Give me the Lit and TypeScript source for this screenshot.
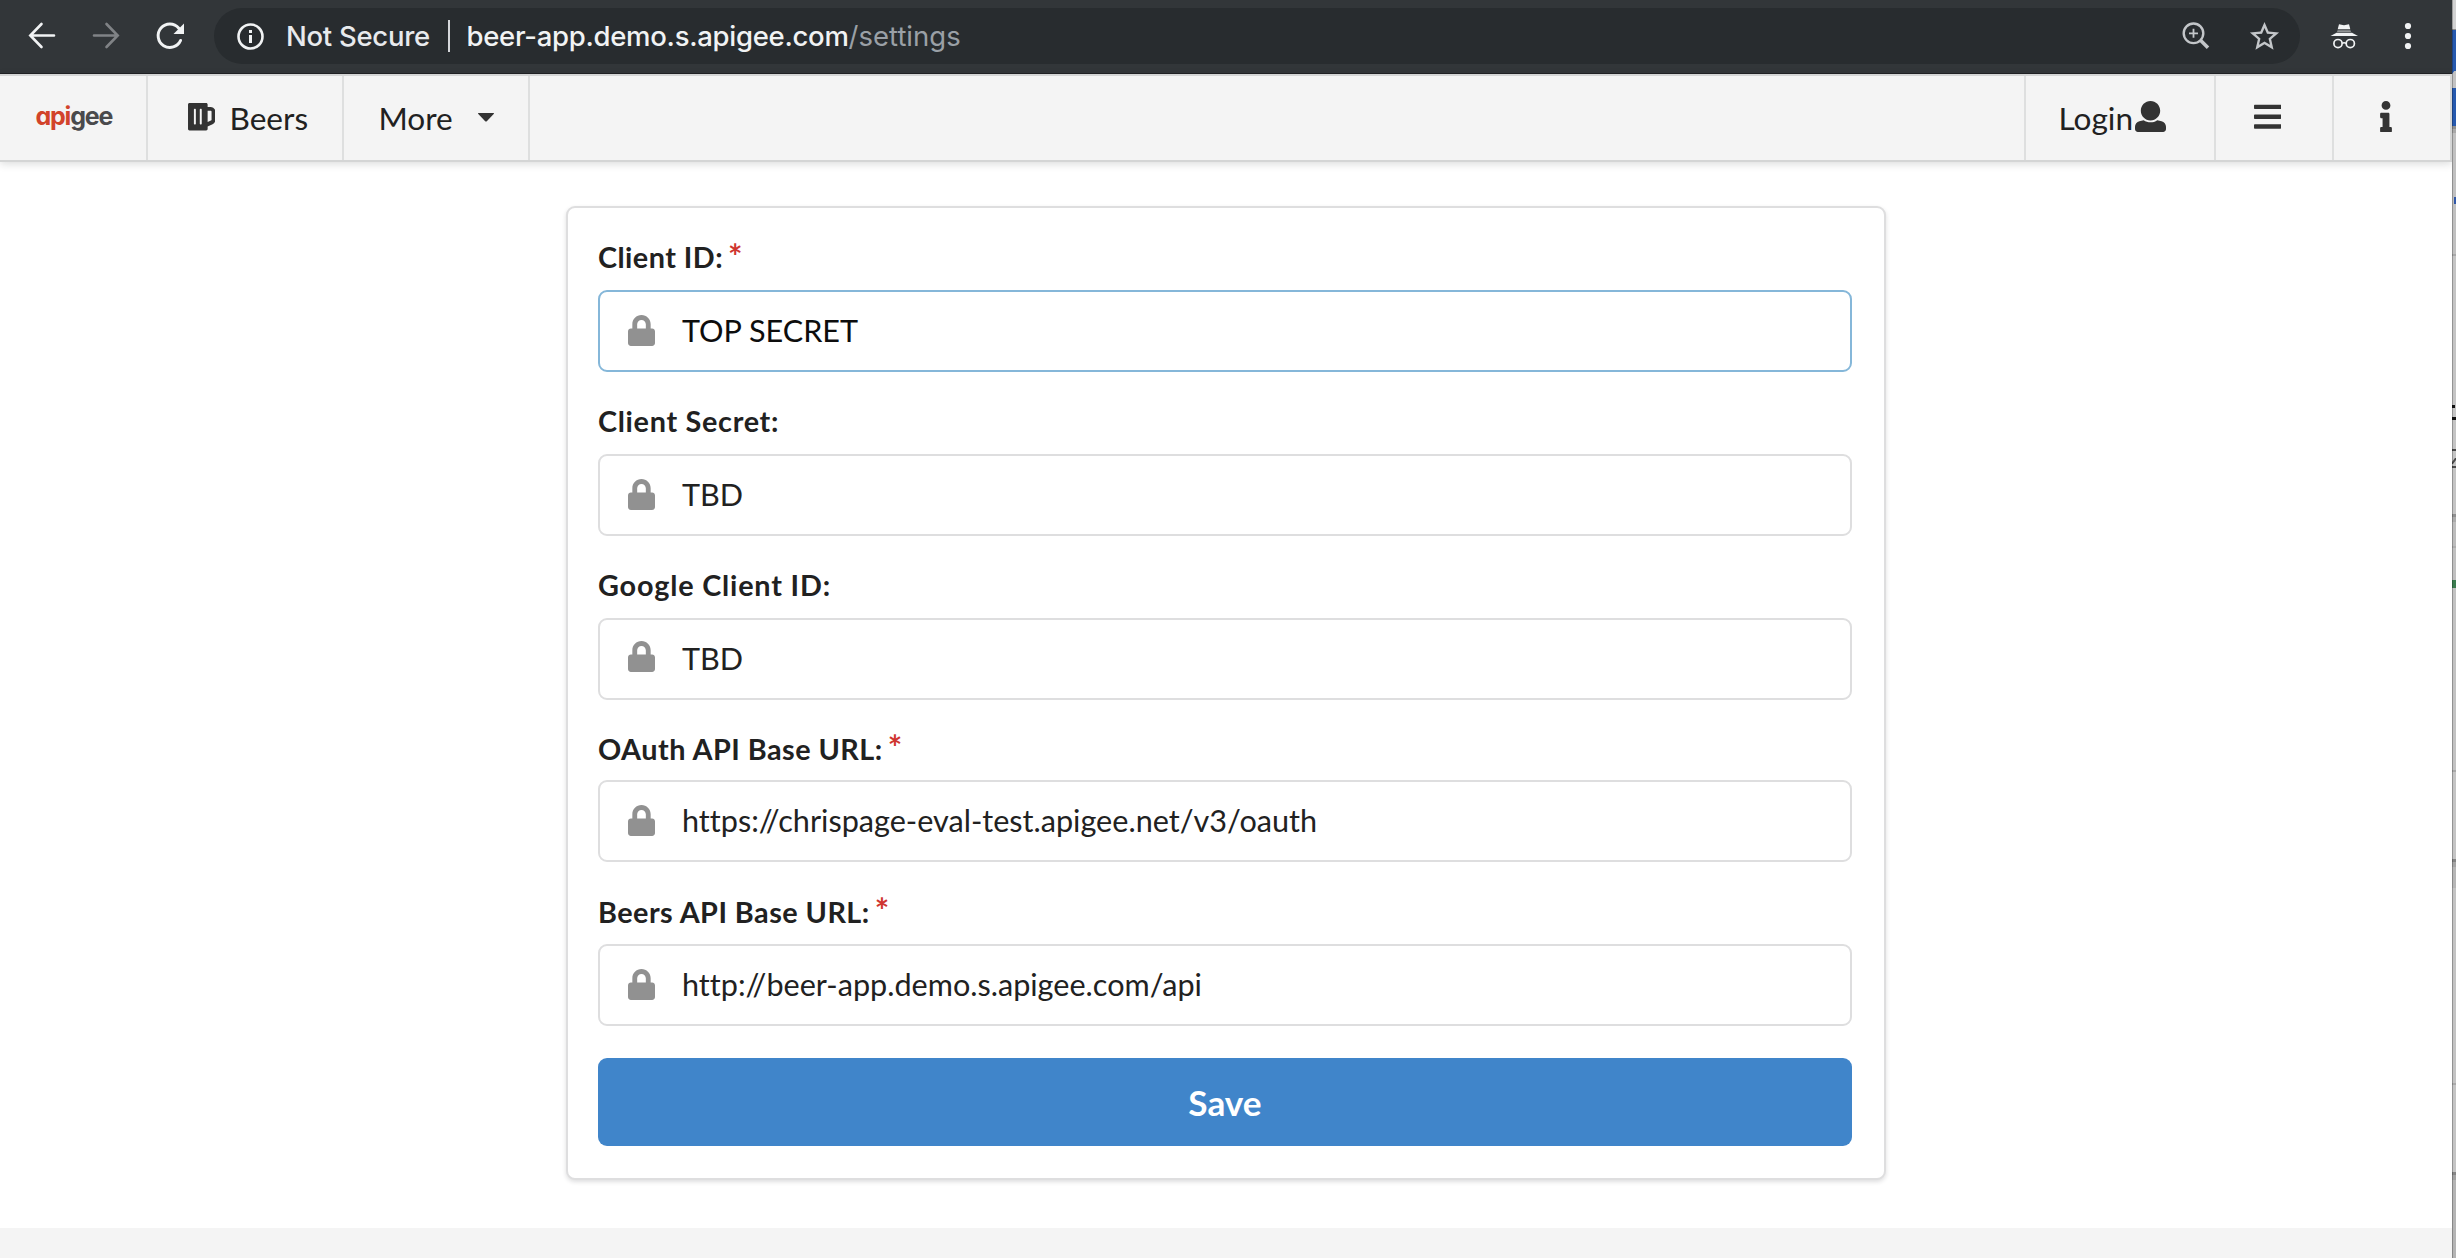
import { LitElement, html, css, svg, nothing } from "lit";
import { customElement, property } from "lit/decorators.js";
import { classMap } from "lit/directives/class-map.js";
import { styleMap } from "lit/directives/style-map.js";

interface Setting {
  label: string;
  value: string;
  tracking: number;
  required?: boolean;
  focused?: boolean;
  offset?: "raised" | "tight" | "low";
}

const SETTINGS: Setting[] = [
  { label: "Client ID:", value: "TOP SECRET", tracking: 0.45, required: true, focused: true },
  { label: "Client Secret:", value: "TBD", tracking: 0.7 },
  { label: "Google Client ID:", value: "TBD", tracking: 0.82, offset: "raised" },
  { label: "OAuth API Base URL:", value: "https://chrispage-eval-test.apigee.net/v3/oauth", tracking: 0.48, required: true, offset: "tight" },
  { label: "Beers API Base URL:", value: "http://beer-app.demo.s.apigee.com/api", tracking: 0.46, required: true, offset: "low" },
];

const solid = (viewBox: string, d: string) => html`<svg viewBox=${viewBox} fill="currentColor"><path d=${d}></path></svg>`;

const ICONS = {
  lock: solid("0 0 448 512", "M400 224h-24v-72C376 68.2 307.8 0 224 0S72 68.2 72 152v72H48c-26.5 0-48 21.5-48 48v192c0 26.5 21.5 48 48 48h352c26.5 0 48-21.5 48-48V272c0-26.5-21.5-48-48-48zm-104 0H152v-72c0-39.7 32.3-72 72-72s72 32.3 72 72v72z"),
  beer: solid("0 0 448 512", "M368 96h-48V56c0-13.255-10.745-24-24-24H24C10.745 32 0 42.745 0 56v400c0 13.255 10.745 24 24 24h272c13.255 0 24-10.745 24-24v-42.11l80.606-35.977C429.396 365.063 448 336.388 448 304.86V176c0-44.112-35.888-80-80-80zm16 208.86a16.018 16.018 0 0 1-9.479 14.611L320 343.805V160h48c8.822 0 16 7.178 16 16v128.86zM208 384c-8.836 0-16-7.164-16-16V144c0-8.836 7.164-16 16-16s16 7.164 16 16v224c0 8.836-7.164 16-16 16zm-96 0c-8.836 0-16-7.164-16-16V144c0-8.836 7.164-16 16-16s16 7.164 16 16v224c0 8.836-7.164 16-16 16z"),
  user: solid("0 0 512 512", "M256 0c88.366 0 160 71.634 160 160s-71.634 160-160 160S96 248.366 96 160 167.634 0 256 0zm183.283 333.821l-71.313-17.828c-74.923 53.89-165.738 41.864-223.94 0l-71.313 17.828C29.981 344.505 0 382.903 0 426.955V464c0 26.51 21.49 48 48 48h416c26.51 0 48-21.49 48-48v-37.045c0-44.052-29.981-82.45-72.717-93.134z"),
  bars: solid("0 0 448 512", "M16 132h416c8.837 0 16-7.163 16-16V76c0-8.837-7.163-16-16-16H16C7.163 60 0 67.163 0 76v40c0 8.837 7.163 16 16 16zm0 160h416c8.837 0 16-7.163 16-16v-40c0-8.837-7.163-16-16-16H16c-8.837 0-16 7.163-16 16v40c0 8.837 7.163 16 16 16zm0 160h416c8.837 0 16-7.163 16-16v-40c0-8.837-7.163-16-16-16H16c-8.837 0-16 7.163-16 16v40c0 8.837 7.163 16 16 16z"),
  info: solid("0 0 192 512", "M20 424.229h20V279.771H20c-11.046 0-20-8.954-20-20V212c0-11.046 8.954-20 20-20h112c11.046 0 20 8.954 20 20v212.229h20c11.046 0 20 8.954 20 20V492c0 11.046-8.954 20-20 20H20c-11.046 0-20-8.954-20-20v-47.771c0-11.046 8.954-20 20-20zM96 0C56.235 0 24 32.235 24 72s32.235 72 72 72 72-32.235 72-72S135.764 0 96 0z"),
  caret: solid("0 0 16 9", "M0.6 0h14.8c.6 0 .7.5.3 1L8.8 8.2a1.1 1.1 0 0 1-1.6 0L.3 1C-.1.5 0 0 .6 0z"),
};

@customElement("settings-field")
export class SettingsField extends LitElement {
  @property({ attribute: false }) setting!: Setting;

  static styles = css`
    :host { display: block; }
    .label {
      display: flex;
      height: 35px;
      margin-bottom: 15px;
      font: 700 28.8px/35px Lato, sans-serif;
      color: #212121;
      white-space: nowrap;
    }
    .tight .label { margin-bottom: 13px; }
    .low .label { padding-top: 1px; margin-bottom: 14px; }
    .star { color: #cf3630; font-size: 34px; line-height: 31px; margin-left: 5px; }
    .tight .star, .low .star { line-height: 29px; }
    .box {
      display: flex;
      align-items: center;
      box-sizing: border-box;
      height: 82px;
      padding: 0 28px;
      border: 2px solid #dededf;
      border-radius: 9px;
      background: #fff;
      color: #212121;
      font: 400 30.6px/78px Lato, sans-serif;
      font-variant-ligatures: none;
      white-space: nowrap;
    }
    .focused .box { border-color: #85b7d9; color: #0d0d0d; }
    .lock { display: flex; color: #919191; margin: 0 27px 1px 0; }
    .raised .lock { margin-bottom: 5px; }
    .lock svg { display: block; width: 27px; height: 31px; }
  `;

  render() {
    const s = this.setting;
    const classes = { focused: !!s.focused, raised: s.offset === "raised", tight: s.offset === "tight", low: s.offset === "low" };
    return html`
      <div class=${classMap(classes)}>
        <div class="label">
          <span style=${styleMap({ letterSpacing: `${s.tracking}px` })}>${s.label}</span>
          ${s.required ? html`<span class="star">*</span>` : nothing}
        </div>
        <div class="box"><span class="lock">${ICONS.lock}</span><span>${s.value}</span></div>
      </div>
    `;
  }
}

@customElement("browser-toolbar")
export class BrowserToolbar extends LitElement {
  static styles = css`
    :host {
      display: flex;
      align-items: center;
      box-sizing: border-box;
      height: 74px;
      padding: 8px 0 9px 26px;
      background: #323639;
      border-bottom: 1px solid #202124;
      color: #f1f3f4;
      font: 500 27.5px/56px Inter, "Liberation Sans", sans-serif;
      letter-spacing: -0.28px;
      white-space: nowrap;
    }
    svg { display: block; flex: none; width: 32px; height: 32px; fill: none; stroke: currentColor; }
    .nav { display: flex; gap: 32px; }
    .dim { color: #808386; }
    .omnibox {
      display: flex;
      align-items: center;
      flex: none;
      box-sizing: border-box;
      width: 2086px;
      height: 56px;
      margin-left: 28px;
      padding: 0 18px 0 20px;
      border-radius: 28px;
      background: #282c2f;
    }
    .secure { width: 144.5px; margin-left: 20px; color: #e8eaed; }
    .divider { width: 2px; height: 32px; margin: 0 16.5px 0 17.5px; background: #d5d7da; }
    .path { color: #9aa0a6; font-weight: 400; letter-spacing: 0; }
    .actions { display: flex; align-items: center; gap: 35px; margin-left: auto; color: #c3c6c9; }
    .actions .fav { width: 35px; height: 35px; fill: currentColor; stroke: none; }
    .incognito { margin-left: 28px; }
    .dots { width: 16px; margin-left: 40px; fill: currentColor; stroke: none; }
  `;

  render() {
    return html`
      <div class="nav">
        <svg viewBox="0 0 32 32" stroke-width="2.6" stroke-linecap="round"><path d="M28 15.5H5M15.5 4L4.3 15.5L15.5 27"></path></svg>
        <svg class="dim" viewBox="0 0 32 32" stroke-width="2.6" stroke-linecap="round"><path d="M4 15.5H27M16.5 4L27.7 15.5L16.5 27"></path></svg>
        <svg viewBox="0 0 32 32" stroke-width="2.9" stroke-linecap="round">
          <path d="M26.6 20.4A11.7 11.7 0 1 1 24.8 8.2"></path>
          <path fill="currentColor" stroke="none" d="M30 3.5V14H19.5z"></path>
        </svg>
      </div>
      <div class="omnibox">
        <svg viewBox="0 0 32 32" stroke-width="2.6"><circle cx="16.5" cy="16.5" r="12"></circle><path d="M16.5 15V23M16.5 10V13" stroke-width="3"></path></svg>
        <span class="secure">Not Secure</span>
        <span class="divider"></span>
        <span>beer-app.demo.s.apigee.com</span><span class="path">/settings</span>
        <div class="actions">
          <svg viewBox="0 0 32 32">
            <circle cx="13.5" cy="13.3" r="9.8" stroke-width="2.4"></circle>
            <path d="M13.5 8.8V17.8M9 13.3H18" stroke-width="1.8"></path>
            <path d="M20.5 20.3L28 27.8" stroke-width="3.6"></path>
          </svg>
          <svg class="fav" viewBox="0 0 24 24"><path d="M22 9.24l-7.19-.62L12 2 9.19 8.63 2 9.24l5.46 4.73L5.82 21 12 17.27 18.18 21l-1.63-7.03L22 9.24zM12 15.4l-3.76 2.27 1-4.28-3.32-2.88 4.38-.38L12 6.1l1.71 4.04 4.38.38-3.32 2.88 1 4.28L12 15.4z"></path></svg>
        </div>
      </div>
      <svg class="incognito" viewBox="0 0 32 32">
        <path fill="currentColor" stroke="none" d="M11 4.2L16 5.2L21 4.2L22.3 9.3H9.7z"></path>
        <path fill="currentColor" stroke="none" opacity=".5" d="M9.5 10.3h13l.5 1.8H9z"></path>
        <path fill="currentColor" stroke="none" d="M8.5 12.8h15.5l6 3.2H2.5z"></path>
        <circle cx="10" cy="23.6" r="4.1" stroke-width="1.7"></circle>
        <circle cx="22.3" cy="23.6" r="4.1" stroke-width="1.7"></circle>
        <path d="M14 23.4q2.1-1.4 4.2 0" stroke-width="1.6"></path>
      </svg>
      <svg class="dots" viewBox="0 0 16 32"><circle cx="8" cy="6" r="3.1"></circle><circle cx="8" cy="16" r="3.1"></circle><circle cx="8" cy="26" r="3.1"></circle></svg>
    `;
  }
}

@customElement("app-menu")
export class AppMenu extends LitElement {
  static styles = css`
    :host {
      display: flex;
      justify-content: space-between;
      box-sizing: border-box;
      height: 88px;
      border: 2px solid #d4d5d5;
      border-left: 0;
      background: #f4f4f4;
      box-shadow: 0 2px 8px rgba(34, 36, 38, 0.16);
      color: #212121;
      font: 400 31.6px/84px Lato, sans-serif;
      white-space: nowrap;
    }
    svg { display: block; flex: none; color: #333; }
    .group { display: flex; }
    .item { display: flex; align-items: center; box-sizing: border-box; height: 84px; }
    .left .item { border-right: 2px solid #dedfdf; }
    .right .item { border-left: 2px solid #dedfdf; }
    .brand {
      width: 148px;
      padding: 0 0 4px 35.5px;
      font: 700 25px/80px Inter, Roboto, sans-serif;
      font-feature-settings: "cv11";
      letter-spacing: -1.2px;
      color: #4a4a4c;
    }
    .brand .hot { color: #d2432a; }
    .beers { width: 196px; padding-left: 39.5px; gap: 14.5px; }
    .beers svg { width: 27.5px; height: 31.4px; margin-bottom: 3px; }
    .more { width: 186px; padding-left: 34.5px; gap: 25.5px; }
    .more svg { width: 16px; height: 9px; margin-bottom: 1px; }
    .login { width: 190px; padding-left: 32.5px; gap: 2px; }
    .login svg { width: 31px; height: 31px; margin-bottom: 3px; }
    .bars { width: 118px; padding-left: 37.5px; }
    .bars svg { width: 27.5px; height: 31.4px; margin-bottom: 3px; }
    .info { width: 118px; padding-left: 45.5px; }
    .info svg { width: 12px; height: 31.4px; margin-bottom: 3px; }
  `;

  render() {
    return html`
      <div class="group left">
        <div class="item brand"><span class="hot">api</span><span>gee</span></div>
        <div class="item beers">${ICONS.beer}<span>Beers</span></div>
        <div class="item more"><span>More</span>${ICONS.caret}</div>
      </div>
      <div class="group right">
        <div class="item login"><span>Login</span>${ICONS.user}</div>
        <div class="item bars">${ICONS.bars}</div>
        <div class="item info">${ICONS.info}</div>
      </div>
    `;
  }
}

/* Sliver of the windows lying behind the browser: [top, height, colour]. */
const SLIVER: [number, number, string][] = [
  [0, 29, "#d2d2d2"], [29, 1, "#8a8a8a"], [30, 41, "#2659ae"], [71, 17, "#c2c2c2"], [88, 38, "#2659ae"],
  [126, 3, "#8f8f8f"], [129, 4, "#a9a9a9"], [133, 121, "#c0c0c0"], [254, 2, "#a8a8a8"], [256, 258, "#c4c4c4"],
  [514, 3, "#8f8f8f"], [517, 5, "#ababab"], [522, 24, "#bcbcbc"], [546, 2, "#aeaeae"], [548, 32, "#c0c0c0"],
  [580, 8, "#3b7c4f"], [588, 182, "#c2c2c2"], [770, 2, "#a8a8a8"], [772, 87, "#c4c4c4"], [859, 3, "#858585"],
  [862, 5, "#a5a5a5"], [867, 21, "#b6b6b6"], [888, 195, "#c3c3c3"], [1083, 2, "#aaaaaa"], [1085, 87, "#c4c4c4"],
  [1172, 3, "#858585"], [1175, 5, "#a2a2a2"], [1180, 78, "#b4b4b4"],
];

@customElement("app-root")
export class AppRoot extends LitElement {
  static styles = css`
    :host { display: flex; height: 1258px; overflow: hidden; background: #fff; }
    .window { display: flex; flex-direction: column; width: 2452px; flex: none; }
    .main { flex: 1; display: flex; flex-direction: column; align-items: center; padding-top: 44px; }
    .card {
      display: flex;
      flex-direction: column;
      gap: 32px;
      box-sizing: border-box;
      width: 1320px;
      padding: 32px 32px 32px 30px;
      border: 2px solid #dededf;
      border-radius: 9px;
      background: #fff;
      box-shadow: 0 2px 4px rgba(34, 36, 38, 0.15);
    }
    .save {
      height: 88px;
      margin: 0;
      padding: 0;
      border: 0;
      border-radius: 9px;
      background: #4085ca;
      color: #fff;
      font: 700 35.2px/88px Lato, sans-serif;
      text-align: center;
    }
    .footer { height: 30px; background: #f4f4f4; }
    .sliver { display: block; width: 4px; height: 1258px; flex: none; }
  `;

  render() {
    return html`
      <div class="window">
        <browser-toolbar></browser-toolbar>
        <app-menu></app-menu>
        <div class="main">
          <div class="card">
            ${SETTINGS.map((s) => html`<settings-field .setting=${s}></settings-field>`)}
            <button class="save">Save</button>
          </div>
        </div>
        <div class="footer"></div>
      </div>
      <svg class="sliver" viewBox="0 0 4 1258">
        ${SLIVER.map(([y, h, fill]) => svg`<rect x="0" y=${y} width="4" height=${h} fill=${fill}></rect>`)}
        <path d="M0 71V74L3 70H4V68H0z" fill="#2659ae"></path>
        <rect x="2" y="197" width="2" height="7" fill="#3158a8"></rect>
        <path d="M0 405H3V408H0zM0 417H4V420H0z" fill="#111"></path>
        <path d="M0 449H4V451H0zM0 466H4V468H0zM0 462L3 458H4V460L1 464H0z" fill="#4a4a4a"></path>
        <rect x="0" y="0" width="1" height="1258" fill="#000" opacity=".25"></rect>
      </svg>
    `;
  }
}
